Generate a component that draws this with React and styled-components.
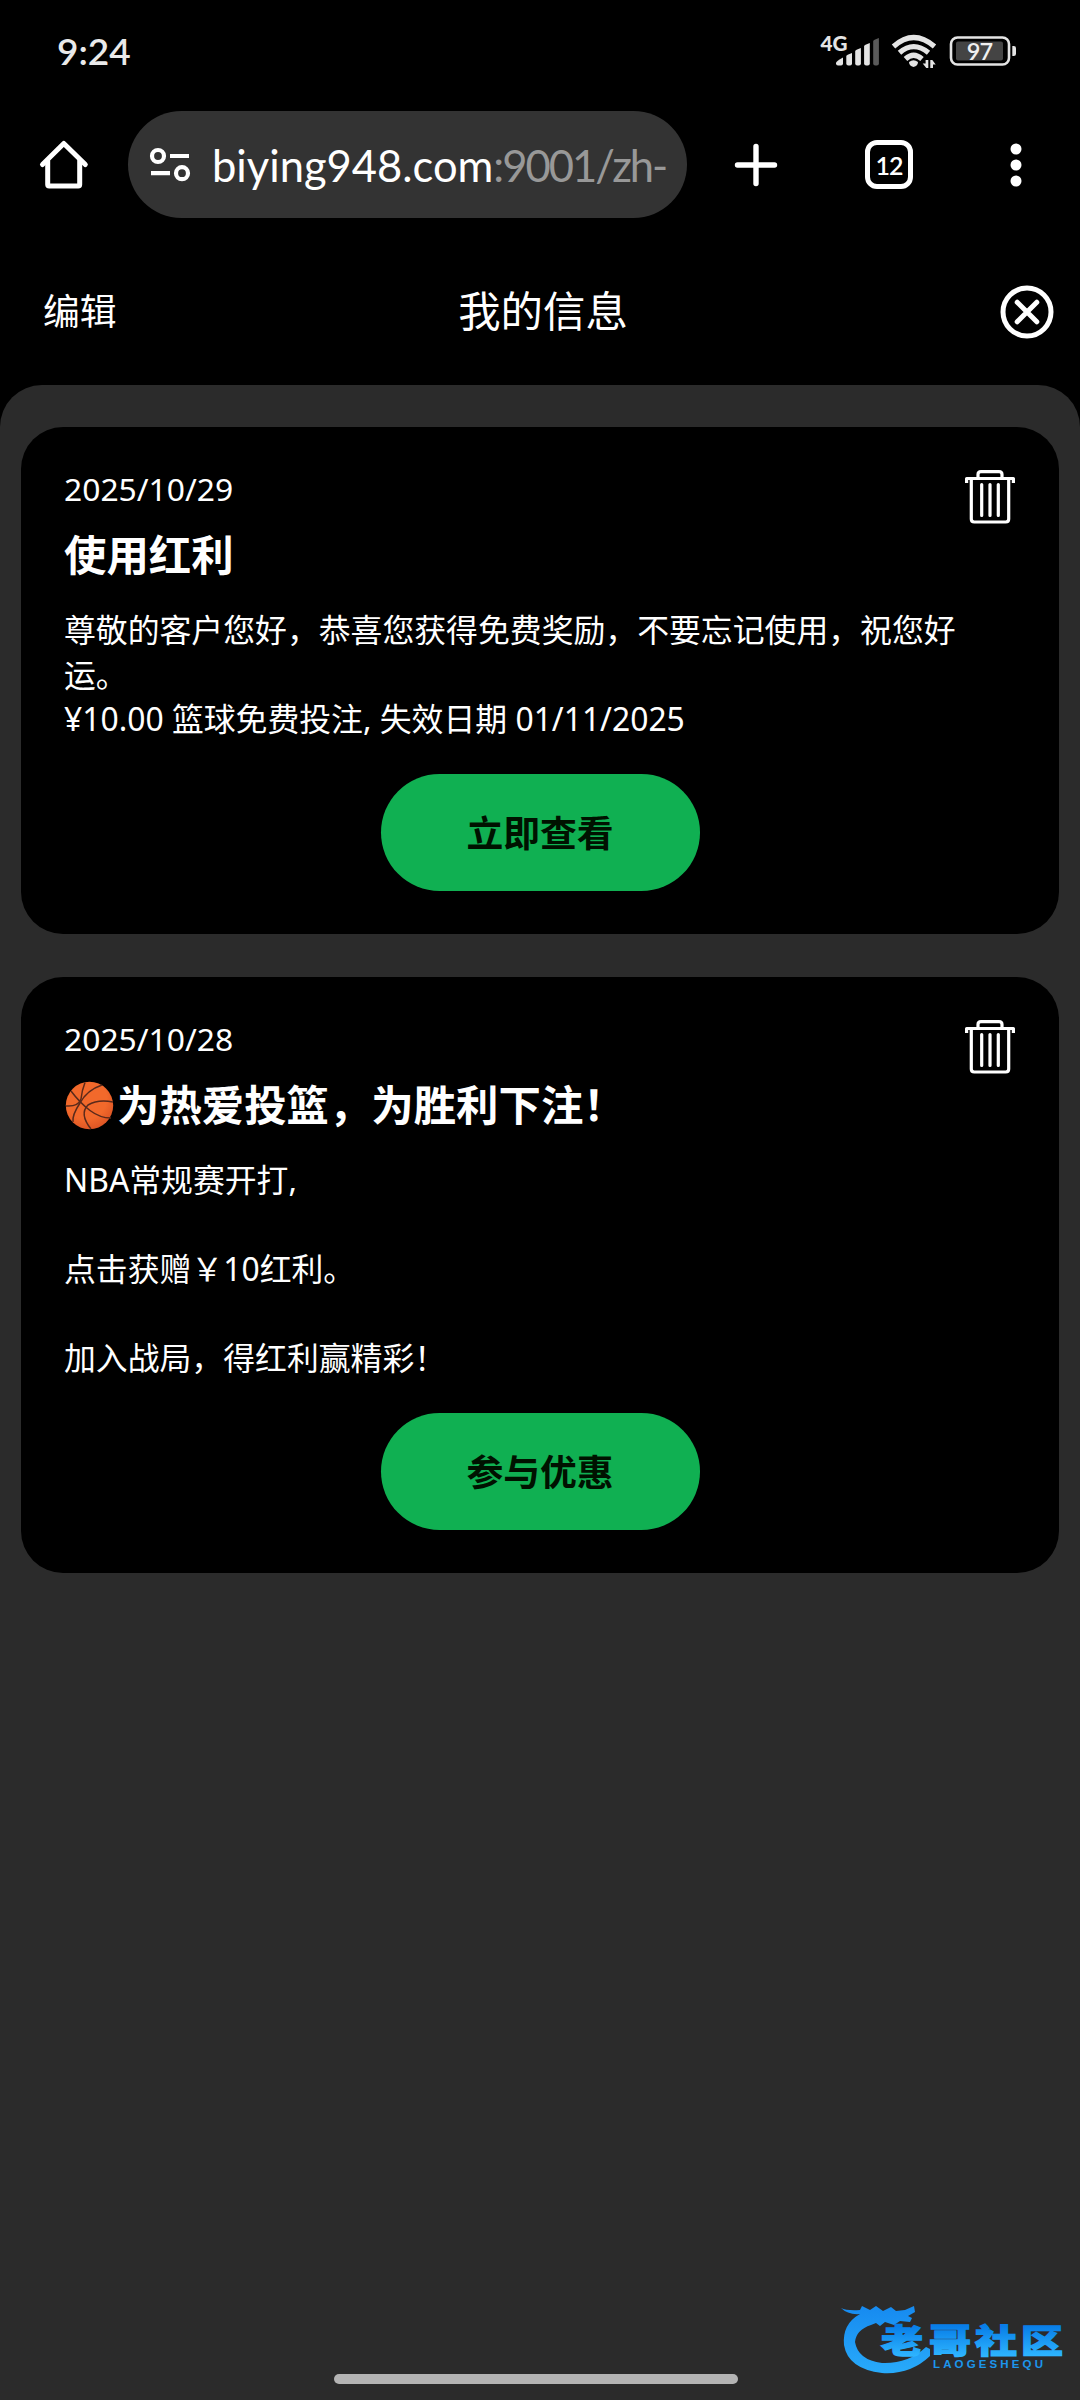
import React from "react";
import styled, { createGlobalStyle } from "styled-components";

const GlobalStyle = createGlobalStyle`
  * { box-sizing: border-box; }
  body { margin: 0; background: #000; }
  button { font: inherit; color: inherit; border: 0; background: none; padding: 0; }
`;

const Screen = styled.div`
  position: relative;
  display: flex;
  flex-direction: column;
  width: 1080px;
  height: 2400px;
  overflow: hidden;
  background: #000;
  color: #fff;
  font-family: "Noto Sans", "Noto Sans CJK SC", sans-serif;
`;

const StatusBar = styled.header`
  display: flex;
  align-items: center;
  justify-content: space-between;
  height: 102px;
  padding: 0 62px 0 57px;
  flex: none;
`;

const Clock = styled.span`
  font: 600 37px/44px Lato, sans-serif;
  color: #e9e9e9;
`;

const StatusIcons = styled.div`
  display: flex;
  align-items: center;
  gap: ${(p) => p.$gap}px;
  svg { display: block; overflow: visible; }
`;

const BrowserBar = styled.nav`
  display: flex;
  align-items: center;
  height: 125px;
  padding: 0 36px 0 36px;
  flex: none;
`;

const IconButton = styled.button`
  display: flex;
  align-items: center;
  justify-content: center;
  width: 56px;
  height: 56px;
  margin-left: ${(p) => p.$ml || 0}px;
  flex: none;
`;

const AddressPill = styled.div`
  display: flex;
  align-items: center;
  width: 559px;
  height: 107px;
  margin-left: 36px;
  padding: 0 14px 0 21px;
  border-radius: 54px;
  background: #333;
  flex: none;
`;

const Url = styled.div`
  margin-left: 21px;
  font: 400 43.5px/60px Lato, sans-serif;
  white-space: nowrap;
  span { color: #989898; letter-spacing: -2px; }
`;

const TabCount = styled.span`
  display: flex;
  align-items: center;
  justify-content: center;
  width: 48px;
  height: 49px;
  border: 5px solid #fff;
  border-radius: 12px;
  font: 600 25px/28px Lato, sans-serif;
  letter-spacing: -1px;
`;

const PageHeader = styled.div`
  display: grid;
  grid-template-columns: 200px 1fr 200px;
  align-items: center;
  height: 158px;
  padding: 11px 26px 0 43px;
  flex: none;
`;

const EditButton = styled.button`
  justify-self: start;
  padding-bottom: 1px;
  font-size: 36.8px;
  line-height: 50px;
`;

const PageTitle = styled.h1`
  margin: 0;
  padding: 0 11px 1px 0;
  text-align: center;
  font-weight: 400;
  font-size: 42.4px;
  line-height: 56px;
`;

const CloseButton = styled.button`
  justify-self: end;
  display: flex;
`;

const Panel = styled.main`
  flex: 1;
  display: flex;
  flex-direction: column;
  gap: 43px;
  padding: 42px 21px;
  border-radius: 42px 42px 0 0;
  background: #2b2b2b;
`;

const Card = styled.article`
  display: grid;
  grid-template-columns: 1fr 50px;
  height: ${(p) => p.$height}px;
  align-content: start;
  padding: 42px 44px 42px 43px;
  border-radius: 42px;
  background: #000;
`;

const CardDate = styled.time`
  font-size: 31.8px;
  line-height: 39px;
`;

const DeleteButton = styled.button`
  grid-row: 1 / span 2;
  grid-column: 2;
  align-self: start;
  display: flex;
  padding-top: 1px;
`;

const CardTitle = styled.h2`
  display: flex;
  align-items: center;
  margin: 18px 0 0;
  font-size: 42.4px;
  line-height: 58px;
  font-weight: 700;
  svg { margin: 0 3px 0 1px; }
`;

const CardBody = styled.p`
  grid-column: 1 / -1;
  margin: 24px 0 0;
  padding-right: 30px;
  font-size: 31.85px;
  line-height: 44.5px;
  white-space: pre-line;
`;

const ActionButton = styled.button`
  grid-column: 1 / -1;
  justify-self: center;
  width: 319px;
  height: 117px;
  margin: 32.5px 0 0 1px;
  padding-bottom: 4px;
  border-radius: 59px;
  background: #10b052;
  color: #001200;
  font-size: 36.8px;
  font-weight: 600;
`;

const HomeIndicator = styled.div`
  position: absolute;
  left: 334px;
  bottom: 16px;
  width: 404px;
  height: 10px;
  border-radius: 5px;
  background: #b4b4b4;
`;

const Watermark = styled.div`
  position: absolute;
  right: 0;
  bottom: 2px;
  width: 260px;
  height: 120px;
`;

const SignalIcon = () => (
  <svg width="60" height="34" viewBox="820 34 60 34">
    <text x="820.500" y="50.500" fontFamily="Lato, sans-serif" fontWeight="900" fontSize="21.500" textLength="27" lengthAdjust="spacingAndGlyphs" fill="#e4e4e4">4G</text>
    <g fill="#e4e4e4">
      <path d="M836 63q0-2 7-5.500v6q0 2-2 2h-3q-2 0-2-2z" />
      <path d="M846.300 56q0-1 5.700-3v10.500q0 2-2 2h-1.700q-2 0-2-2z" />
      <path d="M855.200 51q0-1 5.700-3v15.500q0 2-2 2h-1.700q-2 0-2-2z" />
      <path d="M864.100 46q0-1 5.700-3v20.500q0 2-2 2h-1.700q-2 0-2-2z" />
    </g>
    <path d="M873.200 41q0-1 5.700-3v25.500q0 2-2 2h-1.700q-2 0-2-2z" fill="#5a5a5a" />
  </svg>
);

const WifiIcon = () => (
  <svg width="45" height="34" viewBox="891 34 45 34">
    <g fill="none" stroke="#e4e4e4" strokeWidth="5.200">
      <path d="M892.500 46.500Q912.500 28.500 933.500 46.500" />
      <path d="M898.500 52.700Q912.500 40.500 927.500 52.700" />
      <path d="M904.500 59Q912.500 51.500 921 59" />
    </g>
    <path d="M908 62q4.500-3.500 9 0q0 4-4.500 5q-4.500-1-4.500-5z" fill="#e4e4e4" />
    <path d="M927.300 60v8h-2l-3.600-4.500h2.900v-3.500zM929.300 68v-8h2l3.400 4.500h-2.700v3.500z" fill="#e4e4e4" />
  </svg>
);

const BatteryIcon = () => (
  <svg width="69" height="34" viewBox="949 34 69 34">
    <rect x="951" y="37.500" width="58" height="27" rx="6.500" fill="none" stroke="#e4e4e4" strokeWidth="2.600" />
    <rect x="956" y="41.500" width="47" height="19" rx="2" fill="#444" />
    <path d="M1012.300 46h1.500q2.200 0 2.200 2.200v5.600q0 2.200-2.200 2.200h-1.500z" fill="#e4e4e4" />
    <text x="979.500" y="59.500" textAnchor="middle" fontFamily="Lato, sans-serif" fontWeight="600" fontSize="23.500" letterSpacing="-0.8" fill="#f0f0f0">97</text>
  </svg>
);

const HomeIcon = () => (
  <svg width="56" height="56" viewBox="36 137 56 56" fill="none" stroke="#fff" strokeWidth="5" strokeLinecap="round" strokeLinejoin="round">
    <path d="M42.500 164.500L63.800 143.500L85.300 164.500" />
    <path d="M47.700 161v23.500q0 1.500 1.500 1.500h29q1.500 0 1.500-1.500v-23.500" />
  </svg>
);

const SiteSettingsIcon = () => (
  <svg width="42" height="38" viewBox="149 146 42 38" fill="none" stroke="#fff" strokeWidth="4.200">
    <circle cx="158" cy="156" r="6" />
    <path d="M170 156h19M151 173.200h19" />
    <circle cx="182" cy="173.200" r="6" />
  </svg>
);

const PlusIcon = () => (
  <svg width="44" height="44" viewBox="0 0 44 44" stroke="#fff" strokeWidth="5.400" strokeLinecap="round">
    <path d="M22 3.500v37M3.500 22h37" />
  </svg>
);

const MoreIcon = () => (
  <svg width="12" height="44" viewBox="0 0 12 44" fill="#fff">
    <circle cx="6" cy="6" r="5.500" />
    <circle cx="6" cy="22" r="5.500" />
    <circle cx="6" cy="38" r="5.500" />
  </svg>
);

const CloseIcon = () => (
  <svg width="54" height="54" viewBox="0 0 54 54" fill="none" stroke="#fff" strokeWidth="5" strokeLinecap="round">
    <circle cx="27" cy="27" r="24" />
    <path d="M17.200 17.200L36.800 36.800M36.800 17.200L17.200 36.800" />
  </svg>
);

const TrashIcon = () => (
  <svg width="50" height="54" viewBox="0 0 50 54" fill="none" stroke="#fff" strokeWidth="3.200" strokeLinejoin="round">
    <path d="M1.600 13V8.500H48.400V13" />
    <path d="M13 8.500V4.500Q13 1.600 16 1.600H34Q37 1.600 37 4.500V8.500" />
    <path d="M6.300 9V49Q6.300 52 9.300 52H40.700Q43.700 52 43.700 49V9" />
    <path d="M16.700 14.500V45.500M25 14.500V45.500M33.300 14.500V45.500" strokeLinecap="round" />
  </svg>
);

const BasketballIcon = () => (
  <svg width="49" height="49" viewBox="0 0 49 49">
    <defs>
      <radialGradient id="ball" cx="42%" cy="35%" r="68%">
        <stop offset="0.65" stopColor="#f2692b" />
        <stop offset="1" stopColor="#dc5424" />
      </radialGradient>
    </defs>
    <circle cx="24.500" cy="24.500" r="23.700" fill="url(#ball)" />
    <g fill="none" stroke="#5a2a1b" strokeWidth="1.500">
      <path d="M6 10Q15 22 25 29.500T46 37" />
      <path d="M20 1.500Q17 9 16 18Q13 26 1 25" />
      <path d="M37 4Q22 9 15 22Q7 34 8 41" />
      <path d="M48 21Q33 18 23 24Q14 33 26 48" />
    </g>
  </svg>
);

const LogoMark = () => (
  <svg width="260" height="120" viewBox="0 0 260 120">
    <defs>
      <linearGradient id="blue" x1="0" y1="28" x2="0" y2="94" gradientUnits="userSpaceOnUse">
        <stop offset="0" stopColor="#168af0" />
        <stop offset="1" stopColor="#28aafa" />
      </linearGradient>
      <linearGradient id="word" x1="0" y1="-34" x2="0" y2="4" gradientUnits="userSpaceOnUse">
        <stop offset="0" stopColor="#087ee8" />
        <stop offset="1" stopColor="#2eb5ff" />
      </linearGradient>
    </defs>
    <path fill="url(#blue)" d="M21 30Q27 33 40 32L42 28L50 32L56 28L63 33L71 29L76 33L85 32L94 28L95 34L88 38L92 40L90 44L80 43L74 47L65 44L60 48L56 45L51 47Q36 52 35 64Q38 82 62 85Q88 86 106 69L110 71L110 78Q90 97 62 95Q28 91 24 67Q22 46 40 36Q28 37 21 30Z" />
    <g transform="translate(0 75) scale(1 .79)" fill="url(#word)" stroke="url(#word)" strokeWidth="1.600" fontFamily="Noto Sans CJK SC, sans-serif" fontWeight="900" fontSize="42">
      <text x="61" y="0">老</text>
      <text x="109" y="0">哥</text>
      <text x="155" y="0">社</text>
      <text x="201" y="0">区</text>
    </g>
    <text x="113" y="90" fontFamily="Liberation Sans, sans-serif" fontWeight="700" fontSize="11.500" textLength="110" fill="#1c96ec">LAOGESHEQU</text>
  </svg>
);

const messages = [
  {
    date: "2025/10/29",
    title: "使用红利",
    body: "尊敬的客户您好，恭喜您获得免费奖励，不要忘记使用，祝您好运。\n¥10.00 篮球免费投注, 失效日期 01/11/2025",
    action: "立即查看",
    height: 507,
  },
  {
    date: "2025/10/28",
    title: "为热爱投篮，为胜利下注！",
    ball: true,
    body: "NBA常规赛开打,\n\n点击获赠￥10红利。\n\n加入战局，得红利赢精彩！",
    action: "参与优惠",
    height: 596,
  },
];

const MessageCard = ({ message }) => (
  <Card $height={message.height}>
    <CardDate>{message.date}</CardDate>
    <DeleteButton aria-label="删除"><TrashIcon /></DeleteButton>
    <CardTitle>
      {message.ball && <BasketballIcon />}
      {message.title}
    </CardTitle>
    <CardBody>{message.body}</CardBody>
    <ActionButton>{message.action}</ActionButton>
  </Card>
);

export default function App() {
  return (
    <Screen>
      <GlobalStyle />
      <StatusBar>
        <Clock>9:24</Clock>
        <StatusIcons $gap={12}>
          <SignalIcon />
          <WifiIcon />
          <BatteryIcon />
        </StatusIcons>
      </StatusBar>
      <BrowserBar>
        <IconButton><HomeIcon /></IconButton>
        <AddressPill>
          <SiteSettingsIcon />
          <Url>biying948.com<span>:9001/zh-</span></Url>
        </AddressPill>
        <IconButton $ml={41}><PlusIcon /></IconButton>
        <IconButton $ml={77}><TabCount>12</TabCount></IconButton>
        <IconButton $ml={71}><MoreIcon /></IconButton>
      </BrowserBar>
      <PageHeader>
        <EditButton>编辑</EditButton>
        <PageTitle>我的信息</PageTitle>
        <CloseButton aria-label="关闭"><CloseIcon /></CloseButton>
      </PageHeader>
      <Panel>
        {messages.map((m) => <MessageCard key={m.date} message={m} />)}
      </Panel>
      <Watermark><LogoMark /></Watermark>
      <HomeIndicator />
    </Screen>
  );
}
